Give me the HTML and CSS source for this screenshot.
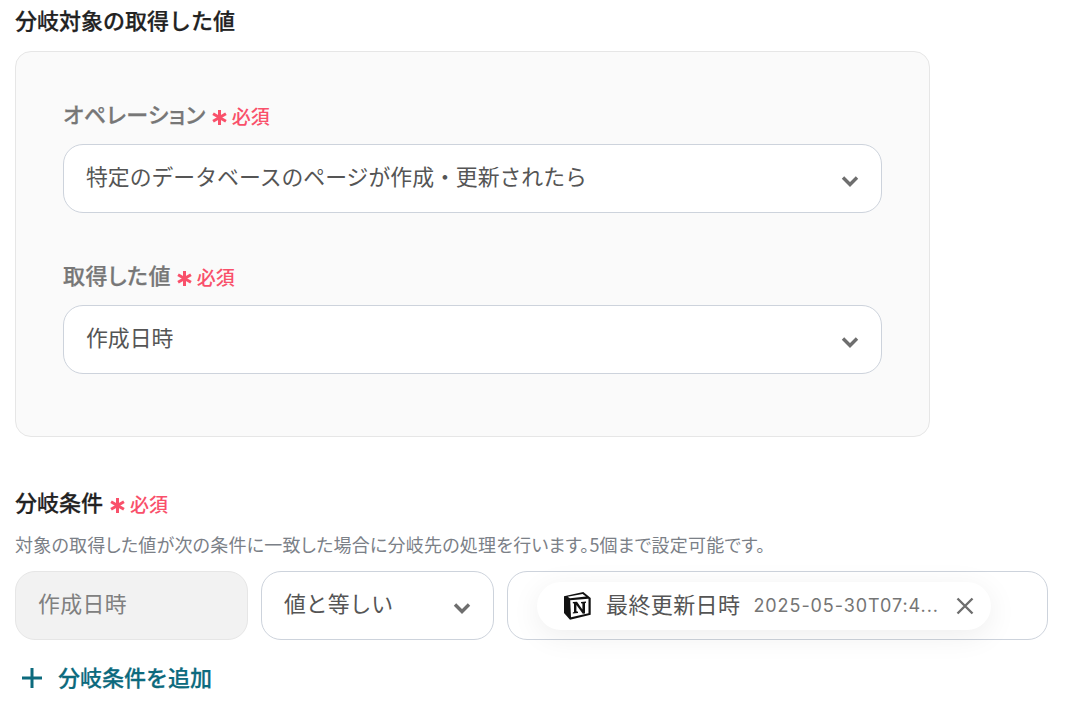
FILE: index.html
```html
<!DOCTYPE html>
<html lang="ja">
<head>
<meta charset="utf-8">
<title>分岐条件</title>
<link rel="stylesheet" href="styles.css">
</head>
<body>
<main class="page">
  <h2 class="title">分岐対象の取得した値</h2>
  <section class="panel">
    <div class="field">
      <div class="label-row"><span class="label">オペレーション</span><span class="req"><svg class="ast" viewBox="0 0 14 14"><path d="M7 0V14M1 3.5 13 10.5M13 3.5 1 10.5"/></svg>必須</span></div>
      <div class="select wide"><span class="select-text">特定のデータベースのページが作成・更新されたら</span>
        <svg class="chev" viewBox="0 0 18 12"><path d="M2 2.5 9 9.5 16 2.5" /></svg></div>
    </div>
    <div class="field">
      <div class="label-row"><span class="label">取得した値</span><span class="req"><svg class="ast" viewBox="0 0 14 14"><path d="M7 0V14M1 3.5 13 10.5M13 3.5 1 10.5"/></svg>必須</span></div>
      <div class="select wide"><span class="select-text">作成日時</span>
        <svg class="chev" viewBox="0 0 18 12"><path d="M2 2.5 9 9.5 16 2.5" /></svg></div>
    </div>
  </section>
  <div class="label-row cond-label"><h2 class="title in-row">分岐条件</h2><span class="req"><svg class="ast" viewBox="0 0 14 14"><path d="M7 0V14M1 3.5 13 10.5M13 3.5 1 10.5"/></svg>必須</span></div>
  <p class="desc">対象の取得した値が次の条件に一致した場合に分岐先の処理を行います。5個まで設定可能です。</p>
  <div class="cond-row">
    <div class="select disabled"><span class="select-text">作成日時</span></div>
    <div class="select op"><span class="select-text">値と等しい</span>
      <svg class="chev" viewBox="0 0 18 12"><path d="M2 2.5 9 9.5 16 2.5" /></svg></div>
    <div class="select value">
      <div class="chip">
        <svg class="notion" viewBox="0 0 27 28">
          <path class="n-side" d="M0 4.3 19.3 0 26.7 6V22.7L6 27.7 0 21Z"/>
          <path class="n-face" d="M6.2 8.2 24.5 6.7V21.2L7 25.3Z"/>
          <path class="n-top" d="M3.6 4.8 18.6 2 22 4.6 6 6.3Z"/>
          <path class="n-letter" d="M8.8 10 13 9.7 18.4 17.6V11.6L17 11.3V10L22 9.6V10.8L21 11.2V21.4L18.8 21.8 12.4 13V19.2L14 19.7V21L8.8 21.6V20.4L10 20V11.6L8.8 11.2Z"/>
        </svg>
        <span class="chip-name">最終更新日時</span>
        <span class="chip-val">2025-05-30T07:4...</span>
        <svg class="close" viewBox="0 0 18 18"><path d="M1.5 1.5 16.5 16.5M16.5 1.5 1.5 16.5"/></svg>
      </div>
    </div>
  </div>
  <div class="add"><svg class="plus" viewBox="0 0 20 20"><path d="M10 0V20M0 10H20"/></svg><span class="add-text">分岐条件を追加</span></div>
</main>
</body>
</html>
```
FILE: styles.css
```css
* { box-sizing: border-box; }
html, body { margin: 0; padding: 0; background: #fff; }
body { font-family: "Noto Sans CJK JP", "Noto Sans", sans-serif; overflow: hidden; height: 706px; }
.page { padding: 5px 0 0 15px; width: 1092px; }
.title { margin: 0; font-size: 22px; line-height: 29px; font-weight: 500; color: #222; -webkit-text-stroke: .25px #222; }
.in-row { padding-bottom: 4px; line-height: 33px; margin-right: 1px; }
.panel { margin-top: 17px; width: 915px; height: 386px; background: #fafafa; border: 1px solid #e6e6e6; border-radius: 16px; padding: 47px; }
.field + .field { margin-top: 47px; }
.label-row { display: flex; align-items: center; height: 32px; }
.label { font-size: 22px; font-weight: 500; color: #777; -webkit-text-stroke: .25px #777; font-feature-settings: "palt"; letter-spacing: .45px; padding-bottom: 4px; }
.req { display: inline-flex; align-items: center; margin-left: 6px; font-size: 19px; font-weight: 500; color: #f9506a; }
.ast { width: 15px; height: 15px; margin: 4px 5px 0 0; fill: none; stroke: #f9506a; stroke-width: 2.8; }
.select { display: flex; align-items: center; justify-content: space-between; height: 69px; border: 1px solid #cdd3dc; border-radius: 20px; background: #fff; padding: 0 22px; }
.wide { margin-top: 13px; width: 819px; }
.select-text { font-size: 21.85px; color: #555; padding-bottom: 6px; }
.chev { width: 18px; height: 12px; margin-top: 4px; fill: none; stroke: #6e6e6e; stroke-width: 3.4; }
.cond-label { margin-top: 50px; }
.desc { margin: 13px 0 0; font-size: 18px; line-height: 24px; color: #7b8087; font-feature-settings: "palt"; letter-spacing: .23px; }
.cond-row { display: flex; gap: 13px; margin-top: 15px; width: 1033px; }
.disabled { width: 233px; background: #f2f2f2; border-color: #e6e6e6; }
.disabled .select-text { color: #808080; letter-spacing: .4px; }
.op { width: 233px; }
.value { flex: 1; padding: 0 0 0 29px; justify-content: flex-start; }
.chip { display: flex; align-items: center; width: 454px; height: 48px; background: #fff; border-radius: 24px; padding: 0 17px 0 27px; box-shadow: 0 6px 30px rgba(0,0,0,.07); }
.notion { width: 27px; height: 28px; flex: none; }
.n-side { fill: #111; }
.n-face { fill: #fff; }
.n-top { fill: #fff; }
.n-letter { fill: #111; }
.chip-name { margin-left: 15px; padding-bottom: 6px; font-size: 22px; letter-spacing: .4px; color: #555; white-space: nowrap; }
.chip-val { margin-left: 13px; font-family: Inter, "Noto Sans", sans-serif; font-size: 18px; letter-spacing: .93px; color: #757575; white-space: nowrap; }
.close { width: 18px; height: 18px; margin-left: auto; fill: none; stroke: #6e6e6e; stroke-width: 2.4; }
.add { display: flex; align-items: center; margin-top: 21px; padding-left: 7px; color: #0c6a7d; font-size: 22px; line-height: 30px; font-weight: 500; -webkit-text-stroke: .25px #0c6a7d; }
.add-text { padding-bottom: 4px; }
.plus { width: 20px; height: 20px; margin-right: 16px; fill: none; stroke: #0c6a7d; stroke-width: 3; }
```
